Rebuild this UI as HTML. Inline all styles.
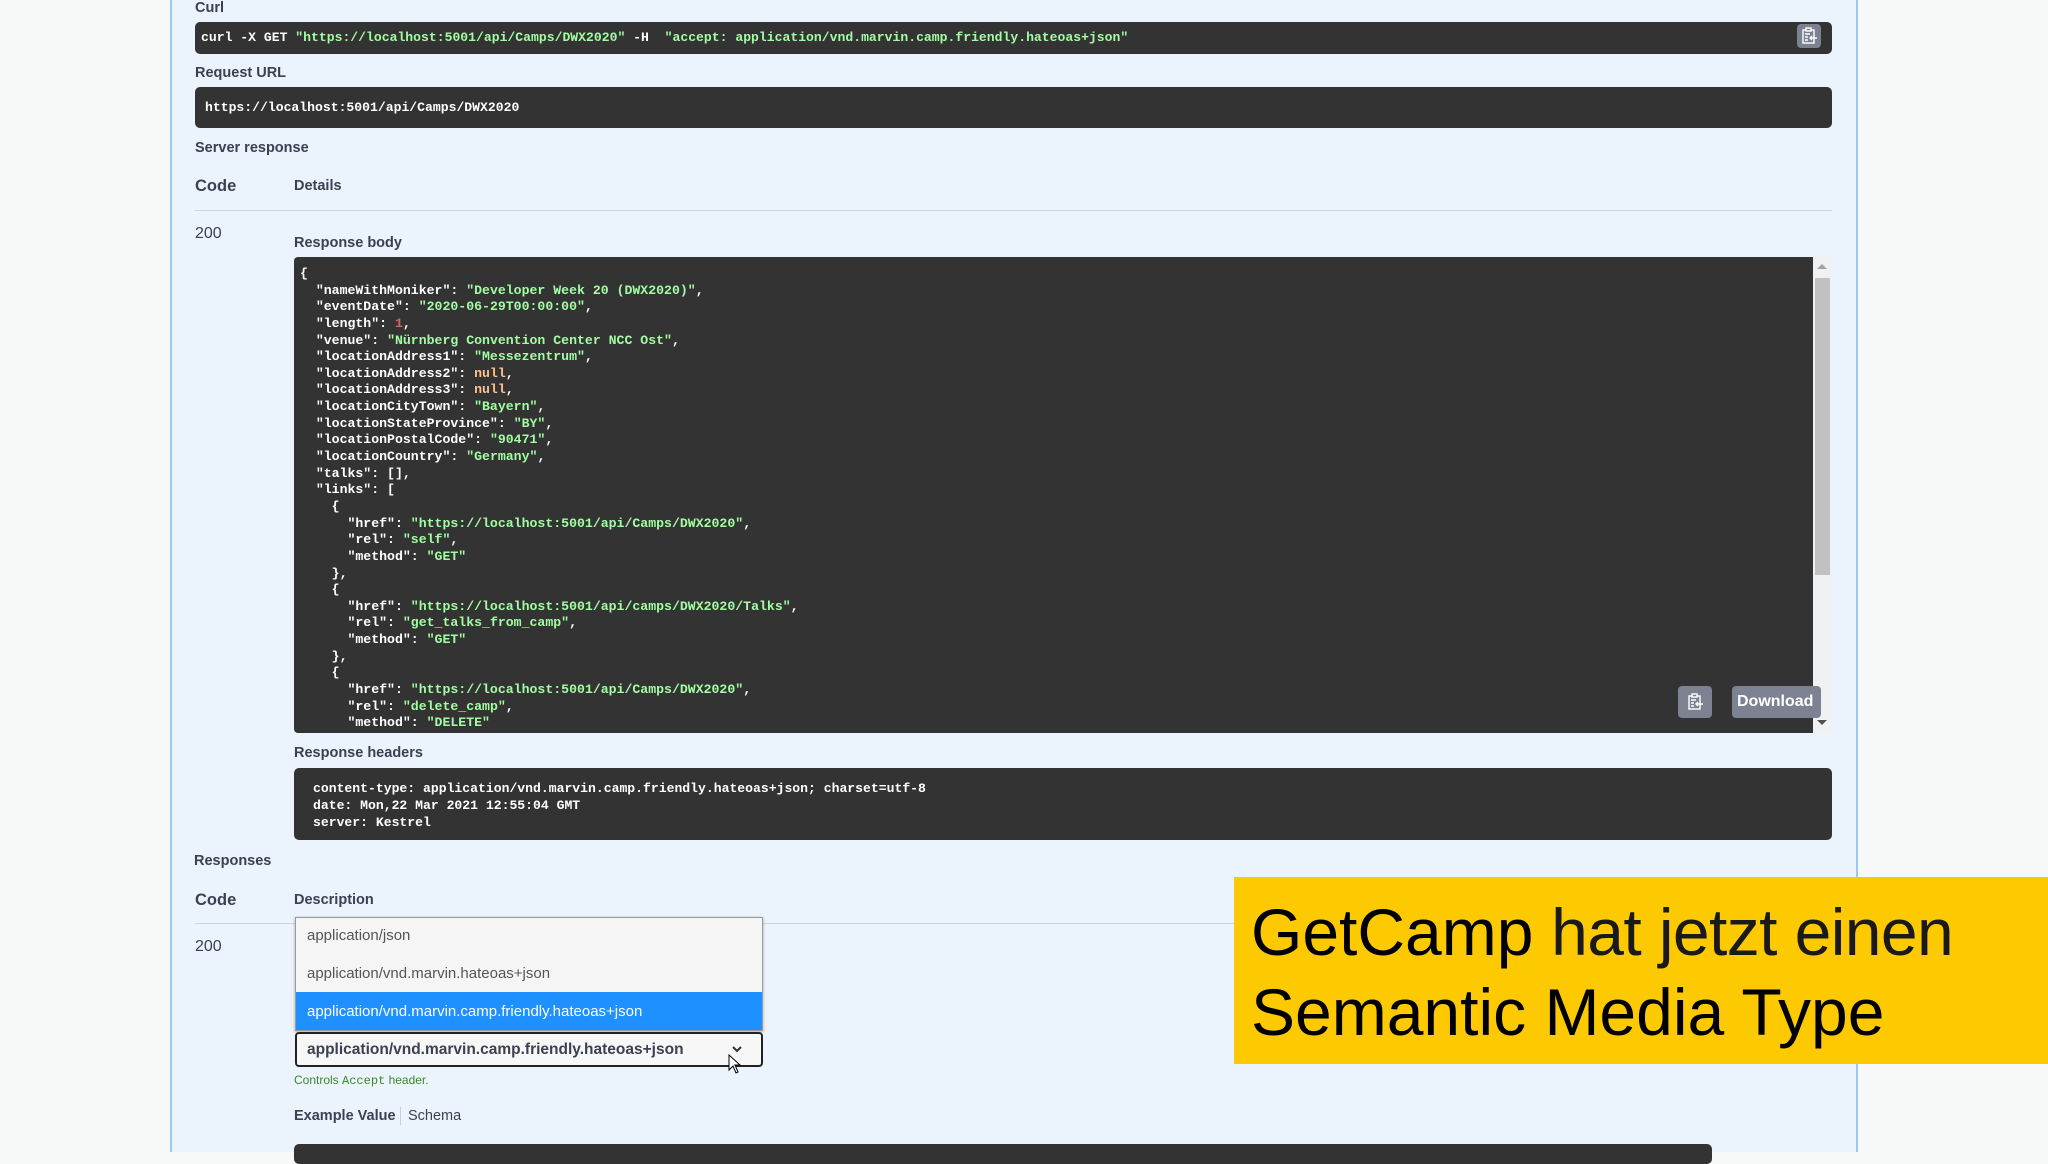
<!DOCTYPE html>
<html><head><meta charset="utf-8"><style>
*{margin:0;padding:0;box-sizing:border-box}
body{width:2048px;height:1152px;overflow:hidden;background:#f7f9f9;position:relative;font-family:"Liberation Sans",sans-serif;color:#3b4151}
.panel{position:absolute;left:170px;top:0;width:1688px;height:1152px;background:#ebf3fc;border-left:2px solid #9cc7ef;border-right:2px solid #9cc7ef}
.a{position:absolute;white-space:pre}
.lbl{font-size:15px;font-weight:bold;color:#3b4151}
.dark{position:absolute;background:#333;border-radius:5px}
.mono{font-family:"Liberation Mono",monospace;font-size:13.1px;font-weight:bold;color:#fff}
.s{color:#a2fca2}.n{color:#fcc28c}.r{color:#d36363}
pre{font-family:"Liberation Mono",monospace;font-size:13.2px;font-weight:bold;color:#fff;line-height:16.64px}
.hr{position:absolute;height:1px;background:#cfd5dc}
.btn{position:absolute;background:#7d8293;border-radius:4px}
</style></head><body>
<div class="panel"></div>

<div class="a lbl" style="left:195px;top:0px;font-size:14.5px">Curl</div>
<div class="dark" style="left:195px;top:22px;width:1637px;height:32px"></div>
<div class="a mono" style="left:201px;top:30px">curl -X GET <span class="s">"https://localhost:5001/api/Camps/DWX2020"</span> -H  <span class="s">"accept: application/vnd.marvin.camp.friendly.hateoas+json"</span></div>
<div class="btn" style="left:1797px;top:24px;width:24px;height:24px"></div>
<svg class="a" style="left:1797px;top:24px" width="24" height="24" viewBox="0 0 24 24" fill="none" stroke="#fff" stroke-width="1.4"><rect x="6" y="6" width="11" height="13"/><rect x="9" y="4" width="5" height="3" fill="#7d8293"/><path d="M8 10h5M8 13h3M8 16h3M20 14h-7M15 12l-2 2 2 2"/></svg>

<div class="a lbl" style="left:195px;top:65px;font-size:14.5px">Request URL</div>
<div class="dark" style="left:195px;top:87px;width:1637px;height:41px"></div>
<div class="a mono" style="left:205px;top:100px">https://localhost:5001/api/Camps/DWX2020</div>

<div class="a lbl" style="left:195px;top:140px;font-size:14.5px">Server response</div>
<div class="a lbl" style="left:195px;top:177px;font-size:16.5px">Code</div>
<div class="a lbl" style="left:294px;top:178px;font-size:14.5px">Details</div>
<div class="hr" style="left:195px;top:210px;width:1637px"></div>
<div class="a" style="left:195px;top:225px;font-size:16px">200</div>
<div class="a lbl" style="left:294px;top:235px;font-size:14.5px">Response body</div>

<div style="position:absolute;left:294px;top:257px;width:1519px;height:476px;background:#333;border-radius:4px 0 0 4px;overflow:hidden">
<pre style="position:absolute;left:6px;top:9px">{
  "nameWithMoniker": <span class="s">"Developer Week 20 (DWX2020)"</span>,
  "eventDate": <span class="s">"2020-06-29T00:00:00"</span>,
  "length": <span class="r">1</span>,
  "venue": <span class="s">"Nürnberg Convention Center NCC Ost"</span>,
  "locationAddress1": <span class="s">"Messezentrum"</span>,
  "locationAddress2": <span class="n">null</span>,
  "locationAddress3": <span class="n">null</span>,
  "locationCityTown": <span class="s">"Bayern"</span>,
  "locationStateProvince": <span class="s">"BY"</span>,
  "locationPostalCode": <span class="s">"90471"</span>,
  "locationCountry": <span class="s">"Germany"</span>,
  "talks": [],
  "links": [
    {
      "href": <span class="s">"https://localhost:5001/api/Camps/DWX2020"</span>,
      "rel": <span class="s">"self"</span>,
      "method": <span class="s">"GET"</span>
    },
    {
      "href": <span class="s">"https://localhost:5001/api/camps/DWX2020/Talks"</span>,
      "rel": <span class="s">"get_talks_from_camp"</span>,
      "method": <span class="s">"GET"</span>
    },
    {
      "href": <span class="s">"https://localhost:5001/api/Camps/DWX2020"</span>,
      "rel": <span class="s">"delete_camp"</span>,
      "method": <span class="s">"DELETE"</span></pre>
</div>
<div class="a" style="left:1813px;top:257px;width:19px;height:476px;background:#f0f1f2"></div>
<div class="a" style="left:1815px;top:278px;width:15px;height:297px;background:#c1c1c1"></div>
<div class="a" style="left:1817px;top:264px;width:0;height:0;border-left:5px solid transparent;border-right:5px solid transparent;border-bottom:5px solid #a3a3a3"></div>
<div class="a" style="left:1817px;top:720px;width:0;height:0;border-left:5px solid transparent;border-right:5px solid transparent;border-top:5px solid #505050"></div>

<div class="btn" style="left:1678px;top:686px;width:34px;height:32px"></div>
<svg class="a" style="left:1683px;top:690px" width="24" height="24" viewBox="0 0 24 24" fill="none" stroke="#fff" stroke-width="1.4"><rect x="6" y="6" width="11" height="13"/><rect x="9" y="4" width="5" height="3" fill="#7d8293"/><path d="M8 10h5M8 13h3M8 16h3M20 14h-7M15 12l-2 2 2 2"/></svg>
<div class="btn" style="left:1732px;top:686px;width:89px;height:32px"></div>
<div class="a" style="left:1737px;top:693px;font-size:16px;font-weight:bold;color:#fff">Download</div>

<div class="a lbl" style="left:294px;top:745px;font-size:14.5px">Response headers</div>
<div class="dark" style="left:294px;top:768px;width:1538px;height:72px"></div>
<pre style="position:absolute;left:313px;top:780px;line-height:17px;font-size:13.1px">content-type: application/vnd.marvin.camp.friendly.hateoas+json; charset=utf-8
date: Mon,22 Mar 2021 12:55:04 GMT
server: Kestrel</pre>

<div class="a lbl" style="left:194px;top:853px;font-size:14.5px">Responses</div>
<div class="a lbl" style="left:195px;top:891px;font-size:16.5px">Code</div>
<div class="a lbl" style="left:294px;top:892px;font-size:14.5px">Description</div>
<div class="hr" style="left:195px;top:923px;width:1637px"></div>
<div class="a" style="left:195px;top:938px;font-size:16px">200</div>

<div class="a" style="left:295px;top:917px;width:468px;height:114px;background:#f5f5f5;border:1px solid #9a9a9a;box-shadow:0 1px 3px rgba(0,0,0,.3)"></div>
<div class="a" style="left:307px;top:927px;font-size:15px;color:#555">application/json</div>
<div class="a" style="left:307px;top:965px;font-size:15px;color:#555">application/vnd.marvin.hateoas+json</div>
<div class="a" style="left:296px;top:992px;width:466px;height:38px;background:#1e90ff"></div>
<div class="a" style="left:307px;top:1003px;font-size:15px;color:#fff">application/vnd.marvin.camp.friendly.hateoas+json</div>

<div class="a" style="left:295px;top:1032px;width:468px;height:35px;background:#f7f7f7;border:2px solid #222;border-radius:4px"></div>
<div class="a" style="left:307px;top:1041px;font-size:15.5px;font-weight:bold;color:#3b4151">application/vnd.marvin.camp.friendly.hateoas+json</div>
<svg class="a" style="left:730px;top:1044px" width="14" height="10" viewBox="0 0 14 10"><path d="M3 3l4 4 4-4" stroke="#333" stroke-width="2" fill="none"/></svg>
<svg class="a" style="left:728px;top:1054px" width="14" height="22" viewBox="0 0 14 22"><path d="M1 1v15l4-4 3 7 2-1-3-7h5z" fill="#fff" stroke="#000" stroke-width="1"/></svg>

<div class="a" style="left:294px;top:1073px;font-size:12px;color:#3a8a2a">Controls <span style="font-family:'Liberation Mono',monospace">Accept</span> header.</div>
<div class="a" style="left:294px;top:1108px;font-size:14.5px;font-weight:bold;color:#3b4151">Example Value</div>
<div class="a" style="left:400px;top:1107px;width:1px;height:18px;background:#ccc"></div>
<div class="a" style="left:408px;top:1108px;font-size:14.5px;color:#3b4151">Schema</div>
<div class="dark" style="left:294px;top:1144px;width:1418px;height:20px"></div>

<div class="a" style="left:1234px;top:877px;width:814px;height:187px;background:#fdc900"></div>
<div class="a" style="left:1251px;top:892px;font-size:66px;color:#000;line-height:80px;letter-spacing:0px">GetCamp<span style="font-weight:normal;letter-spacing:-0.6px;color:#1a1a1a"> hat jetzt einen</span>
Semantic Media Type</div>
</body></html>
